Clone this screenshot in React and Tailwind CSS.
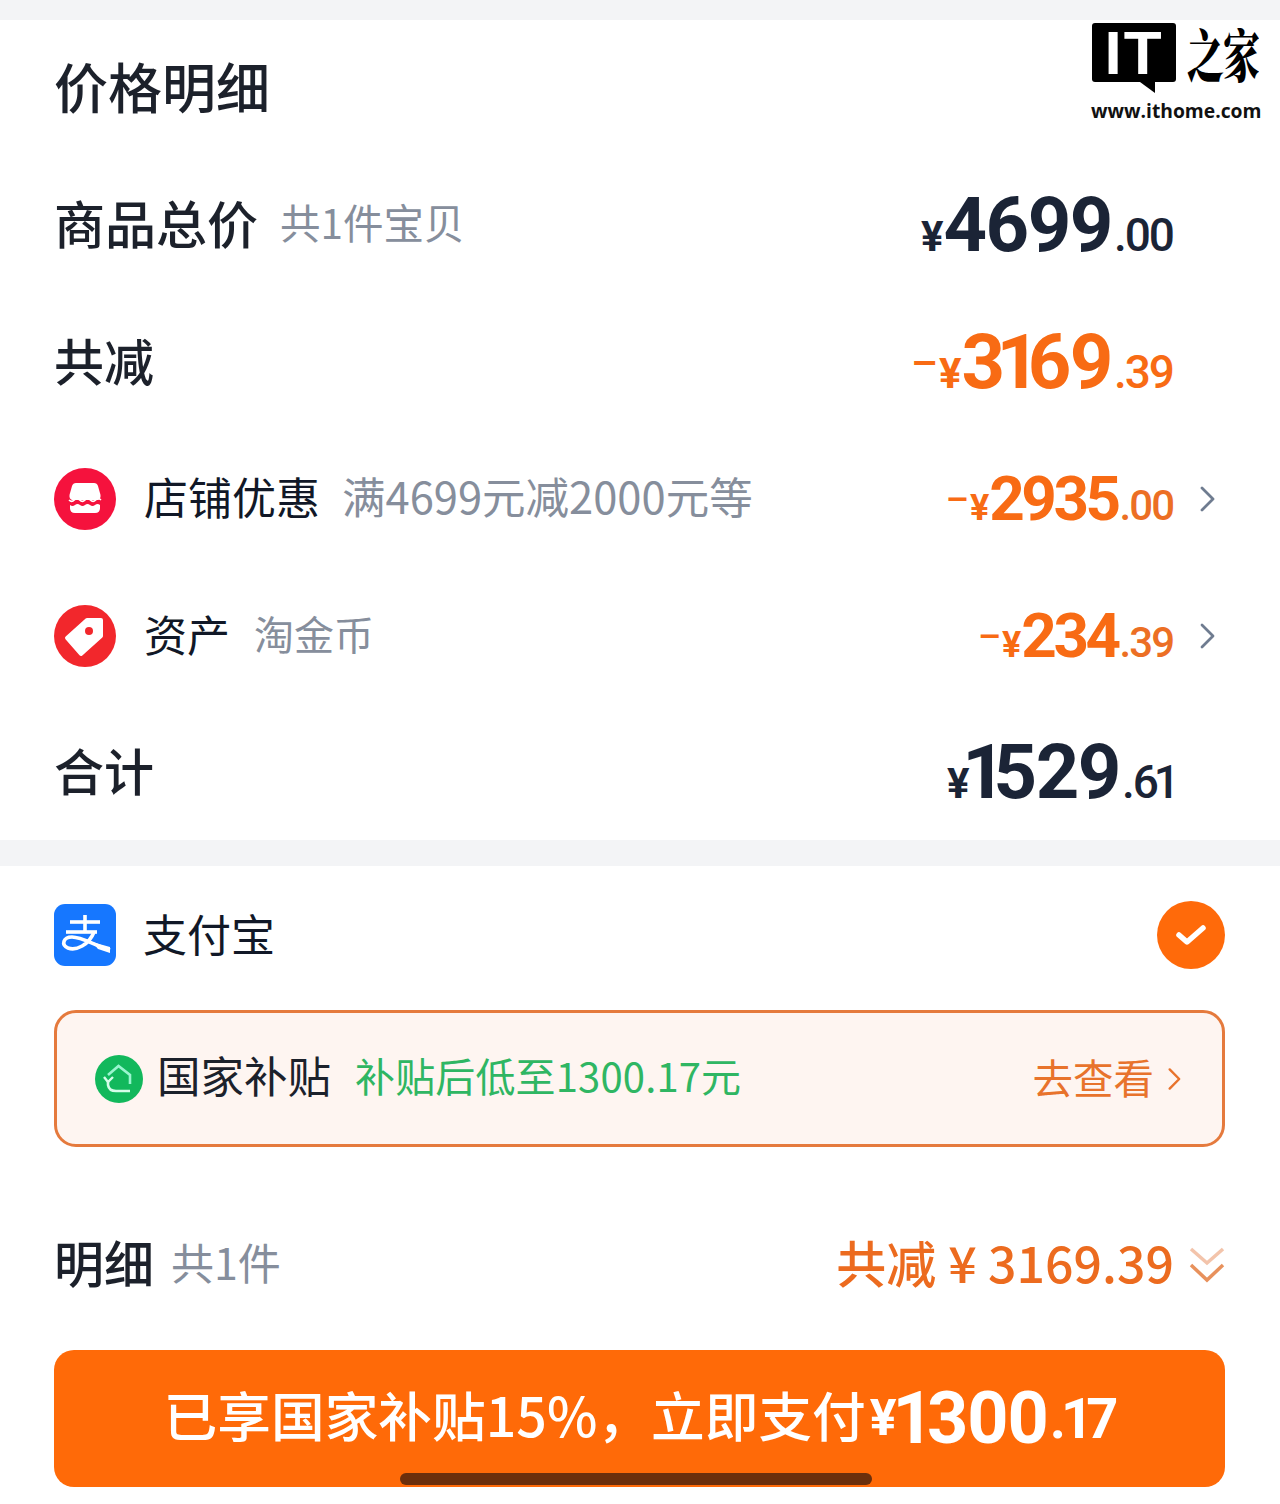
import React from 'react';

const cjk = { fontFamily: '"Noto Sans CJK SC", sans-serif' };

// Roboto's 1 sits in a wide tabular cell, the reference's is narrow, so tighten around it
const Digits = ({ value, pull, track = 0 }) =>
  value.split('').map((c, i) => {
    let spacing = track;
    if (c === '1') spacing -= pull * 0.6;
    if (value[i + 1] === '1') spacing -= pull * 0.4;
    return <span key={i} style={{ letterSpacing: spacing }}>{c}</span>;
  });

// Amount with small yen sign, big integer part and small decimals
const Price = ({ minus, yen, big, small, intPart, dec, color, decColor, track = -1.5, pull = 18, raise = '-translate-y-[10px]' }) => (
  <div className={`flex items-baseline font-['Roboto',sans-serif] font-bold ${color}`}>
    {minus && <span className={`mr-[1px] font-medium ${raise}`} style={{ fontSize: yen }}>–</span>}
    <span style={{ fontSize: yen, letterSpacing: intPart[0] === '1' ? -pull * 0.4 : 0 }}>¥</span>
    <span style={{ fontSize: big }}><Digits value={intPart} pull={pull} track={track} /></span>
    <span className={`ml-[2px] font-medium ${decColor || ''}`} style={{ fontSize: small }}>
      <Digits value={dec} pull={8} track={-2} />
    </span>
  </div>
);

const Chevron = ({ className = 'w-[18px] h-[30px] text-[#6f7c90]' }) => (
  <svg viewBox="0 0 18 30" className={className} fill="none" stroke="currentColor" strokeWidth="2.8" strokeLinecap="round" strokeLinejoin="round">
    <path d="M4 4 L15 15 L4 26" />
  </svg>
);

const StoreIcon = () => (
  <svg viewBox="0 0 62 62" className="w-[62px] h-[62px] shrink-0">
    <circle cx="31" cy="31" r="31" fill="#f5123d" />
    <path d="M22 15 H40 Q43 15 44 18 L46.500 27 Q47 31 44 32 H18 Q15 31 15.500 27 L18 18 Q19 15 22 15 Z" fill="#fff" />
    <path d="M15 32 q2.700 2.600 5.333 0 t5.333 0 t5.333 0 t5.333 0 t5.333 0 t5.333 0" fill="none" stroke="#fff" strokeWidth="1.600" />
    <path d="M16 37 q2.500 2 5 0 t5 0 t5 0 t5 0 t5 0 t5 0 V40 Q46 45 41 45 H21 Q16 45 16 40 Z" fill="#fff" />
  </svg>
);

const TagIcon = () => (
  <svg viewBox="0 0 62 62" className="w-[62px] h-[62px] shrink-0">
    <circle cx="31" cy="31" r="31" fill="#f2272c" />
    <path d="M33 15 H47 V31 L27 49 L13 33 Z" fill="#fff" stroke="#fff" strokeWidth="4" strokeLinejoin="round" />
    <circle cx="35" cy="26" r="4" fill="#f2272c" />
  </svg>
);

const AlipayIcon = () => (
  <svg viewBox="0 0 62 62" className="w-[62px] h-[62px] shrink-0">
    <rect width="62" height="62" rx="11" fill="#1677ff" />
    <g fill="none" stroke="#fff" strokeWidth="3.600">
      <path d="M16 18 H46" />
      <path d="M31 11 V27" />
      <path d="M12 28 H43" />
      <path d="M40 28 C35 41 22 47 14 44 C7 41 9 33 18 33 C28 33 40 41 56 46" />
    </g>
    <path d="M38 38 L56 43 V49 L44 45 Z" fill="#fff" />
  </svg>
);

const SubsidyIcon = () => (
  <svg viewBox="0 0 48 48" className="w-[48px] h-[48px] shrink-0">
    <circle cx="24" cy="24" r="24" fill="#12b85c" />
    <path d="M13 20 L23.500 11 L35 20 V29" fill="none" stroke="#9af5cf" strokeWidth="2.600" />
    <path d="M13 26 V30 Q14 36 21 36 H35" fill="none" stroke="#d6fdea" strokeWidth="2.600" />
    <path d="M9 22 L13 27 L18 22" fill="none" stroke="#d6fdea" strokeWidth="2.400" />
  </svg>
);

const IthomeLogo = () => (
  <div className="absolute left-[1092px] top-[23px] w-[172px]">
    <div className="flex items-start">
      <div className="relative w-[84px] h-[59px] bg-black rounded-[3px] flex items-center justify-center">
        <span className="font-['Liberation_Sans',sans-serif] font-bold text-white text-[62px] leading-none tracking-[2px]">IT</span>
        <svg viewBox="0 0 15 11" className="absolute left-[48px] top-[59px] w-[15px] h-[11px]">
          <path d="M0 0 H15 V11 Z" fill="#000" />
        </svg>
      </div>
      <span className="ml-[11px] text-[37px] leading-[59px] font-black text-black tracking-[-1px] scale-y-[1.55] font-['Noto_Serif_CJK_SC','Noto_Sans_CJK_SC',serif]">之家</span>
    </div>
    <div className="-ml-[1px] mt-[17px] text-[19.300px] leading-[24px] font-bold text-[#111] font-['Open_Sans',sans-serif] whitespace-nowrap">www.ithome.com</div>
  </div>
);

export default function App() {
  const navy = 'text-[#1b2436]';
  const orange = 'text-[#f86b14]';
  const decOrange = 'text-[#ec6f24]';
  // text sits a little above the row centre in the picture
  const label = 'mb-[5px] font-medium';
  const rowLabel = 'mb-[5px] text-[#111827]';
  const hint = 'mb-[5px] text-[#868e9c]';

  return (
    <div className="relative w-[1280px] h-[1504px] bg-white overflow-hidden text-[#1c212b]" style={cjk}>
      <div className="h-[20px] bg-[#f3f4f6]" />

      {/* Price details */}
      <section className="pl-[54px]">
        <div className="h-[136px] flex items-center">
          <h2 className={`text-[54px] leading-none ${label}`}>价格明细</h2>
        </div>

        <div className="h-[137px] flex items-center">
          <span className={`text-[51px] ${label}`}>商品总价</span>
          <span className={`ml-[22px] text-[40.500px] ${hint}`}>共1件宝贝</span>
          <div className="ml-auto">
            <Price yen={42} big={76} small={46} intPart="4699" dec=".00" color={navy} />
          </div>
          <div className="w-[107px]" />
        </div>

        <div className="h-[137px] flex items-center">
          <span className={`text-[50px] ${label}`}>共减</span>
          <div className="ml-auto">
            <Price minus yen={42} big={76} small={46} intPart="3169" dec=".39" color={orange} />
          </div>
          <div className="w-[107px]" />
        </div>

        <div className="h-[137px] flex items-center">
          <StoreIcon />
          <span className={`ml-[28px] text-[44px] ${rowLabel}`}>店铺优惠</span>
          <span className={`ml-[22px] text-[43.500px] ${hint}`}>满4699元减2000元等</span>
          <div className="ml-auto">
            <Price minus yen={36} big={62} small={42} intPart="2935" dec=".00" color={orange} decColor={decOrange} track={-3.5} raise="-translate-y-[8px]" />
          </div>
          <div className="w-[107px] pl-[25px]"><Chevron /></div>
        </div>

        <div className="h-[137px] flex items-center">
          <TagIcon />
          <span className={`ml-[28px] text-[43px] ${rowLabel}`}>资产</span>
          <span className={`ml-[24px] text-[40px] ${hint}`}>淘金币</span>
          <div className="ml-auto">
            <Price minus yen={36} big={62} small={42} intPart="234" dec=".39" color={orange} decColor={decOrange} track={-3.5} raise="-translate-y-[8px]" />
          </div>
          <div className="w-[107px] pl-[25px]"><Chevron /></div>
        </div>

        <div className="h-[136px] flex items-center">
          <span className={`text-[50px] ${label}`}>合计</span>
          <div className="ml-auto">
            <Price yen={42} big={76} small={46} intPart="1529" dec=".61" color={navy} />
          </div>
          <div className="w-[107px]" />
        </div>
      </section>

      <div className="h-[26px] bg-[#f3f4f6]" />

      {/* Payment */}
      <section className="px-[54px] w-[1279px] pt-[34px]">
        <div className="h-[70px] flex items-center justify-between">
          <div className="flex items-center">
            <AlipayIcon />
            <span className={`ml-[27px] text-[44px] ${rowLabel}`}>支付宝</span>
          </div>
          <div className="w-[68px] h-[68px] rounded-full bg-[#ff6a0a] flex items-center justify-center">
            <svg viewBox="0 0 32 24" className="w-[32px] h-[24px]" fill="none" stroke="#fff" strokeWidth="5.500" strokeLinecap="round" strokeLinejoin="round">
              <path d="M4 12 L12 19 L28 5" />
            </svg>
          </div>
        </div>

        <div className="mt-[40px] h-[137px] rounded-[22px] border-[3px] border-[#e57a3d] bg-[#fef5f1] flex items-center pl-[38px] pr-[40px]">
          <SubsidyIcon />
          <span className="ml-[14px] mb-[7px] text-[43.500px]">国家补贴</span>
          <span className="ml-[24px] mb-[7px] text-[40px] tracking-[0.15px] text-[#2fb663]">补贴后低至1300.17元</span>
          <span className="ml-auto mb-[3px] text-[40.500px] text-[#e8732c]">去查看</span>
          <Chevron className="ml-[12px] w-[16px] h-[26px] text-[#e8732c]" />
        </div>

        <div className="mt-[72px] h-[92px] flex items-center">
          <span className="mb-[8px] text-[50px] font-medium">明细</span>
          <span className="ml-[17px] mb-[8px] text-[43px] text-[#868e9c]">共1件</span>
          <span className="ml-auto mb-[8px] text-[50px] text-[#ec6b1f] font-medium">共减</span>
          <span className="ml-[12px] mb-[8px] text-[50px] text-[#ec6b1f] font-medium whitespace-pre">¥ 3169.39</span>
          <svg viewBox="0 0 36 38" className="ml-[15px] w-[36px] h-[38px]" fill="none" strokeWidth="3.500">
            <path d="M2 3 L18 17 L34 3" stroke="#f3c4ab" />
            <path d="M2 19 L18 34 L34 19" stroke="#e8915c" />
          </svg>
        </div>

        <button className="mt-[39px] w-full h-[137px] rounded-[20px] bg-[#ff6a08] text-white flex items-center justify-center pl-[1px]">
          <span className="text-[53.700px] mb-[8px] font-medium">已享国家补贴15%，立即支付</span>
          <span className="font-['Roboto',sans-serif] font-bold text-[50px] ml-[4px] tracking-[-4px]">¥</span>
          <span className="font-['Roboto',sans-serif] font-bold text-[72px]"><Digits value="1300" pull={10} track={-1} /></span>
          <span className="font-['Roboto',sans-serif] font-bold text-[56px] ml-[2px]"><Digits value=".17" pull={8} track={-2} /></span>
        </button>
      </section>

      {/* Home indicator */}
      <div className="absolute left-[400px] top-[1473px] w-[472px] h-[12px] rounded-full bg-[#6b2f0c]" />

      <IthomeLogo />
    </div>
  );
}
